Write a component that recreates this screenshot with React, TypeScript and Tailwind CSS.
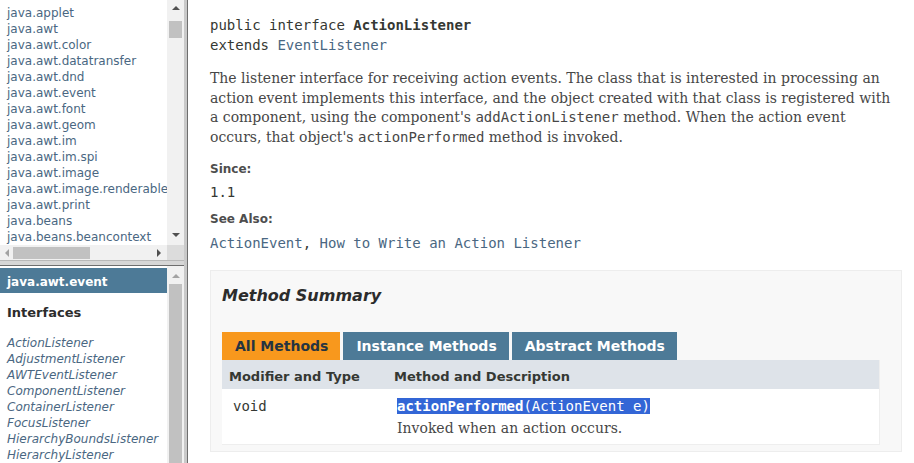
const packages = [
  "java.applet",
  "java.awt",
  "java.awt.color",
  "java.awt.datatransfer",
  "java.awt.dnd",
  "java.awt.event",
  "java.awt.font",
  "java.awt.geom",
  "java.awt.im",
  "java.awt.im.spi",
  "java.awt.image",
  "java.awt.image.renderable",
  "java.awt.print",
  "java.beans",
  "java.beans.beancontext",
];

const interfaces = [
  "ActionListener",
  "AdjustmentListener",
  "AWTEventListener",
  "ComponentListener",
  "ContainerListener",
  "FocusListener",
  "HierarchyBoundsListener",
  "HierarchyListener",
];

const Arrow = ({ dir, muted }: { dir: "up" | "down" | "left" | "right"; muted?: boolean }) => {
  const pts = {
    up: "0,5 4,1 8,5",
    down: "0,1 4,5 8,1",
    left: "5,0 1,4 5,8",
    right: "1,0 5,4 1,8",
  }[dir];
  const vertical = dir === "up" || dir === "down";
  return (
    <svg width={vertical ? 8 : 6} height={vertical ? 6 : 8} viewBox={vertical ? "0 0 8 6" : "0 0 6 8"}>
      <polygon points={pts} fill={muted ? "#a3a3a3" : "#505050"} />
    </svg>
  );
};

const tabs = [
  { label: "All Methods", active: true },
  { label: "Instance Methods", active: false },
  { label: "Abstract Methods", active: false },
];

const App = () => {
  return (
    <div className="flex h-[463px] w-[914px] overflow-hidden bg-white font-['DejaVu_Sans',sans-serif] text-[#353833]">
      {/* left frames */}
      <div className="flex w-[184px] flex-col">
        <div className="flex h-[260px] flex-col">
          <div className="flex h-[245px]">
            <ul className="w-[167px] overflow-hidden pl-[7px] pt-[6px] text-[12px] leading-[14px] text-[#4a6782]">
              {packages.map((p) => (
                <li key={p} className="mb-[2px] whitespace-nowrap">
                  {p}
                </li>
              ))}
            </ul>
            <div className="flex w-[17px] flex-col items-center bg-[#f1f1f1]">
              <div className="flex h-[14px] items-center justify-center pt-[1px]">
                <Arrow dir="up" />
              </div>
              <div className="mt-[7px] h-[17px] w-[13px] bg-[#c1c1c1]" />
              <div className="flex-1" />
              <div className="flex h-[16px] items-center justify-center pb-[4px]">
                <Arrow dir="down" />
              </div>
            </div>
          </div>
          <div className="flex h-[15px]">
            <div className="flex w-[167px] items-center bg-[#f1f1f1]">
              <div className="flex w-[13px] justify-center">
                <Arrow dir="left" muted />
              </div>
              <div className="h-[12px] w-[77px] bg-[#c1c1c1]" />
              <div className="flex-1" />
              <div className="flex w-[17px] justify-center">
                <Arrow dir="right" />
              </div>
            </div>
            <div className="w-[17px] bg-[#dcdcdc]" />
          </div>
        </div>
        <div className="h-[6px] border-t border-b border-t-[#b8b8b8] border-b-[#6e6e6e] bg-[#d6d6d6]" />
        <div className="flex min-h-0 flex-1">
          <div className="w-[167px] overflow-hidden pt-[2px]">
            <div className="h-[25px] bg-[#4d7a97] pl-[7px] pt-[7px] text-[12px] font-bold leading-[14px] text-white">
              java.awt.event
            </div>
            <h2 className="pl-[7px] pt-[12px] text-[13px] font-bold leading-[16px] text-[#2c2c2c]">
              Interfaces
            </h2>
            <ul className="mt-[15px] pl-[7px] text-[12px] italic leading-[14px] text-[#4a6782]">
              {interfaces.map((i) => (
                <li key={i} className="mb-[2px] whitespace-nowrap">
                  {i}
                </li>
              ))}
            </ul>
          </div>
          <div className="flex w-[17px] flex-col items-center bg-[#f1f1f1]">
            <div className="flex h-[20px] items-center justify-center pt-[2px]">
              <Arrow dir="up" muted />
            </div>
            <div className="h-[200px] w-[13px] bg-[#c1c1c1]" />
          </div>
        </div>
      </div>

      {/* frame border */}
      <div className="flex w-[4px]">
        <div className="w-[3px] bg-[#c9c9c9]" />
        <div className="w-[1px] bg-[#6e6e6e]" />
      </div>

      {/* right frame */}
      <div className="flex-1 overflow-hidden pl-[22px] pr-[12px] pt-[15px]">
        <pre className="font-['DejaVu_Sans_Mono',monospace] text-[14px] leading-[20px]">
          public interface <span className="font-bold">ActionListener</span>
          {"\n"}extends <span className="text-[#4a6782]">EventListener</span>
        </pre>
        <p className="mt-[14px] w-[684px] font-['DejaVu_Serif',serif] text-[14px] leading-[19.6px] text-[#474747]">
          The listener interface for receiving action events. The class that is interested in processing an action
          event implements this interface, and the object created with that class is registered with a component, using
          the component's <code className="font-['DejaVu_Sans_Mono',monospace]">addActionListener</code> method. When the
          action event occurs, that object's{" "}
          <code className="font-['DejaVu_Sans_Mono',monospace]">actionPerformed</code> method is invoked.
        </p>
        <div className="mt-[14px] text-[12px] font-bold leading-[16px] text-[#4e4e4e]">Since:</div>
        <div className="mt-[5px] font-['DejaVu_Sans_Mono',monospace] text-[14px] leading-[20px]">1.1</div>
        <div className="mt-[9px] text-[12px] font-bold leading-[16px] text-[#4e4e4e]">See Also:</div>
        <div className="mt-[6px] font-['DejaVu_Sans_Mono',monospace] text-[14px] leading-[20px] text-[#4a6782]">
          ActionEvent<span className="text-[#353833]">, </span>How to Write an Action Listener
        </div>

        <div className="mt-[17px] border border-[#ededed] bg-[#f8f8f8] pb-[6px] pl-[11px] pr-[21px] pt-[15px]">
          <h3 className="text-[16px] font-bold italic leading-[20px] text-[#2c2c2c]">Method Summary</h3>
          <div className="mt-[26px] flex gap-[3px]">
            {tabs.map((t) => (
              <div
                key={t.label}
                className={`flex h-[28px] items-center pl-[13px] pr-[12px] text-[14px] font-bold ${
                  t.active ? "bg-[#f8981d] text-[#253441]" : "bg-[#4d7a97] text-white"
                }`}
              >
                {t.label}
              </div>
            ))}
          </div>
          <div className="border-b border-r border-[#eeeeee]">
            <div className="grid h-[29px] grid-cols-[165px_1fr] bg-[#dee3e9] text-[13px] font-bold leading-[18px] text-[#353833]">
              <div className="pl-[7px] pt-[8px]">Modifier and Type</div>
              <div className="pl-[7px] pt-[8px]">Method and Description</div>
            </div>
            <div className="grid h-[55px] grid-cols-[165px_1fr] bg-white">
              <div className="pl-[11px] pt-[7px] font-['DejaVu_Sans_Mono',monospace] text-[14px] leading-[20px]">
                void
              </div>
              <div className="pl-[10px] pt-[7px]">
                <div className="font-['DejaVu_Sans_Mono',monospace] text-[14px] leading-[20px]">
                  <span className="bg-[#3366d6] text-white">
                    <span className="font-bold">actionPerformed</span>(ActionEvent e)
                  </span>
                </div>
                <div className="mt-[3px] font-['DejaVu_Serif',serif] text-[14px] leading-[19.6px] text-[#474747]">
                  Invoked when an action occurs.
                </div>
              </div>
            </div>
          </div>
        </div>
      </div>
    </div>
  );
};

export default App;
